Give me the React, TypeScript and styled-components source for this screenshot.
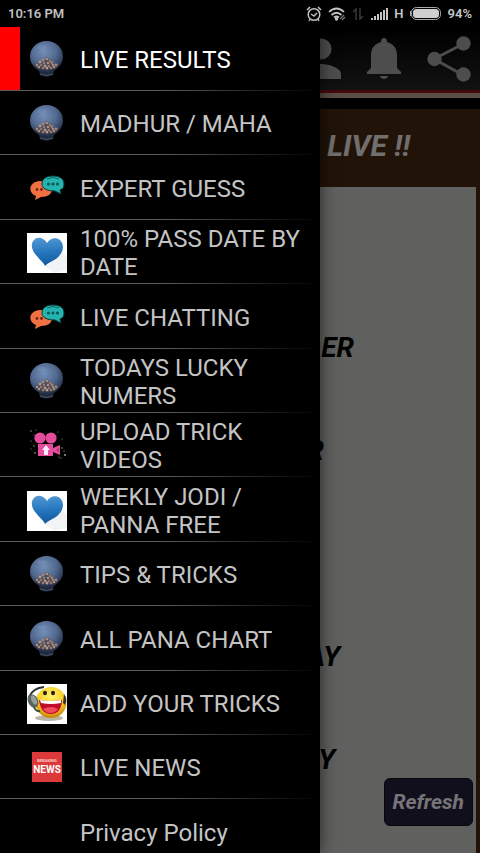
import React from "react";
import styled, { createGlobalStyle } from "styled-components";

const GlobalStyle = createGlobalStyle`
  *, *::before, *::after { box-sizing: border-box; }
  body { margin: 0; background: #000; font-family: Roboto, "Liberation Sans", sans-serif; }
`;

const Screen = styled.div`
  position: relative;
  height: 100vh;
  overflow: hidden;
  display: flex;
  flex-direction: column;
  background: #000;
`;

const StatusBar = styled.header`
  flex: none;
  height: 27px;
  padding: 0 8px;
  display: flex;
  align-items: center;
  justify-content: space-between;
  color: #c6c6c6;
  font-size: 13px;
  font-weight: 600;
  line-height: 27px;
`;

const StatusIcons = styled.div`
  display: flex;
  align-items: center;
  gap: 6px;
  svg { display: block; }
`;

const Page = styled.main`
  flex: 1;
  min-height: 0;
  display: flex;
  flex-direction: column;
`;

const Toolbar = styled.div`
  flex: none;
  height: 63px;
  padding: 0 9px;
  display: flex;
  align-items: center;
  justify-content: flex-end;
  gap: 25px;
  background: linear-gradient(#000, #242424);
`;

const IconButton = styled.button`
  padding: 0;
  border: 0;
  background: none;
  color: #9a9a9a;
  svg { display: block; }
`;

const Stripe = styled.div`
  flex: none;
  height: 8px;
  border-top: 3px solid #8c101e;
  background: #b09c88;
`;

const Board = styled.section`
  flex: 1;
  min-height: 0;
  margin-top: 11px;
  padding-right: 4px;
  display: flex;
  flex-direction: column;
  background: #422610;
`;

const Banner = styled.h1`
  flex: none;
  height: 78px;
  margin: 0;
  padding-right: 66px;
  text-align: right;
  color: #fff;
  opacity: 0.85;
  font: italic 700 30px/74px Roboto, sans-serif;
`;

const Games = styled.div`
  position: relative;
  flex: 1;
  min-height: 0;
  padding-top: 109px;
  background: #c0c0bc;
`;

const Game = styled.p<{ $end: number }>`
  height: 103px;
  margin: 0;
  padding-right: ${(p) => p.$end}px;
  text-align: right;
  color: #000;
  font: italic 700 28px/103px Roboto, sans-serif;
`;

const Refresh = styled.button`
  position: absolute;
  right: 3px;
  bottom: 27px;
  height: 48px;
  padding: 0 8px;
  border: 1px solid #100e1c;
  border-radius: 6px;
  background: #221e38;
  color: #ece8f0;
  font: italic 700 21px/28px Roboto, sans-serif;
`;

const Overlay = styled.div`
  position: absolute;
  inset: 27px 0 0;
  background: rgba(0, 0, 0, 0.5);
`;

const Drawer = styled.nav`
  width: min(320px, 85vw);
  height: 100%;
  overflow: hidden;
  background: #000;
  box-shadow: 0 0 16px rgba(0, 0, 0, 0.6);
`;

const Menu = styled.ul`
  margin: 0;
  padding: 0;
  list-style: none;
`;

const MenuItem = styled.li`
  position: relative;
  height: 64px;
  &:nth-child(5n + 3), &:nth-child(5n) { height: 65px; }
  &::after {
    content: "";
    position: absolute;
    inset: auto 0 0;
    height: 1px;
    background: linear-gradient(90deg, #5c5c5c 50%, #000);
  }
`;

const MenuLink = styled.a<{ $active: boolean }>`
  height: 100%;
  padding: 2px 8px 0 7px;
  border-left: 20px solid ${(p) => (p.$active ? "#ff0000" : "transparent")};
  display: flex;
  align-items: center;
  gap: 13px;
  color: ${(p) => (p.$active ? "#ffffff" : "#c4c4c4")};
  font-size: 24px;
  line-height: 28px;
  text-decoration: none;
`;

const IconSlot = styled.span`
  flex: none;
  width: 40px;
  height: 40px;
  svg { display: block; }
`;

function BowlIcon() {
  const pellets = [
    [16, 20], [20, 19], [23, 21], [13, 22], [17, 23], [21, 23], [25, 23],
    [10, 25], [14, 25], [18, 26], [22, 26], [26, 25], [29, 25], [12, 27], [16, 28], [20, 28], [24, 28], [27, 27],
  ];
  return (
    <svg width="40" height="40" viewBox="0 0 40 40">
      <defs>
        <radialGradient id="glass" cx=".42" cy=".34" r=".7">
          <stop offset="0" stopColor="#7390b9" />
          <stop offset=".55" stopColor="#52698f" />
          <stop offset="1" stopColor="#222e48" />
        </radialGradient>
      </defs>
      <path d="M11 27h17l-2 8q-7 3-13 0z" fill="#1f2a3d" />
      <path d="M13 34q6 3 13 0" stroke="#46536a" strokeWidth="1" fill="none" />
      <ellipse cx="19.500" cy="16.500" rx="16.500" ry="15.500" fill="url(#glass)" />
      <path d="M7 26q3 5 8 6h9q6-1 8-6l-6-3-6-4-7 4z" fill="#242c40" opacity=".5" />
      <ellipse cx="15" cy="7" rx="5" ry="2" fill="#94abc9" opacity=".2" />
      {pellets.map(([x, y], i) => (
        <g key={i}>
          <circle cx={x} cy={y} r="1.700" fill={i % 3 ? "#6d5750" : "#8d766f"} />
          <circle cx={x} cy={y} r=".9" fill={i % 2 ? "#c4ada4" : "#a88c80"} />
        </g>
      ))}
    </svg>
  );
}

function ChatIcon() {
  return (
    <svg width="40" height="40" viewBox="0 0 40 40">
      <path d="M14 12c6 0 11 3 11 8s-4 8-11 8l-6 3 1-4c-9-4-7-15 5-15z" fill="#ef7040" />
      <path d="M26 7c7 0 11 3 11 8 0 3-1 5-4 6l1 4-6-3c-9 0-13-3-13-7 0-5 4-8 11-8z" fill="#25b3ad" stroke="#063c3b" strokeWidth="1" />
      <path d="M20 10q6-3 12 0" fill="none" stroke="#126965" />
      <g fill="#075858"><circle cx="21.500" cy="15" r="1.600" /><circle cx="26" cy="15" r="1.600" /><circle cx="30.500" cy="15" r="1.600" /></g>
      <g fill="#70230e"><circle cx="10" cy="20.500" r="1.400" /><circle cx="14.500" cy="20.500" r="1.400" /></g>
    </svg>
  );
}

function HeartIcon() {
  return (
    <svg width="40" height="40" viewBox="0 0 40 40">
      <defs>
        <linearGradient id="heart" x1=".4" y1="0" x2=".5" y2="1">
          <stop stopColor="#5197d2" /><stop offset=".5" stopColor="#2777be" /><stop offset="1" stopColor="#12569d" />
        </linearGradient>
      </defs>
      <path fill="#fff" d="M0 0h40v40H0z" />
      <path d="M18 33l16-15 6 6v13l-13 3z" fill="#f1f3f5" />
      <path d="M20 10C23 5 29 4 33 7c5 5 3 12-1 16-4 5-9 5-14 10-1-3-5-6-9-11-4-4-6-11-2-15 4-4 10-2 13 3z" fill="url(#heart)" />
    </svg>
  );
}

function CameraIcon() {
  return (
    <svg width="40" height="40" viewBox="0 0 40 40">
      <g fill="#e54d9c">
        <circle cx="13" cy="12" r="5.600" /><circle cx="24" cy="12" r="5.600" />
        <path d="M11 18h15v12H11zM26 22l7-3v10l-7-3z" />
      </g>
      <path d="M19 19l4 5h-2v5h-4v-5h-2z" fill="#ffe8f7" />
      <path d="M29 24l3-2v4z" fill="#a83972" />
      <g fill="#b8aab3">
        <circle cx="4" cy="5" r=".7" /><circle cx="7" cy="9" r=".5" /><circle cx="4" cy="15" r=".6" /><circle cx="7" cy="20" r=".7" />
        <circle cx="4" cy="23" r=".5" /><circle cx="8" cy="27" r=".8" /><circle cx="32" cy="31" r=".6" /><circle cx="35" cy="22" r=".7" />
        <circle cx="38" cy="29" r=".9" /><circle cx="35" cy="13" r=".5" /><circle cx="31" cy="6" r=".5" /><circle cx="37" cy="25" r=".6" />
        <circle cx="9" cy="4" r=".5" /><circle cx="34" cy="32" r=".6" />
      </g>
    </svg>
  );
}

function SmileyIcon() {
  return (
    <svg width="40" height="40" viewBox="0 0 40 40">
      <defs>
        <radialGradient id="face" cx=".5" cy=".3" r=".68"><stop stopColor="#fff36a" /><stop offset=".65" stopColor="#f8cb23" /><stop offset="1" stopColor="#c8860f" /></radialGradient>
      </defs>
      <path fill="#fff" d="M0 0h40v40H0z" />
      <ellipse cx="22" cy="34" rx="14" ry="3" fill="#b9b6a8" />
      <ellipse cx="24" cy="18.500" rx="15.500" ry="15.500" fill="url(#face)" />
      <path d="M2 13Q6 4 17 3" fill="none" stroke="#2b3030" strokeWidth="2" />
      <path d="M37 10q4 5 1 11l-2-2z" fill="#333" />
      <ellipse cx="6" cy="17" rx="5" ry="7" transform="rotate(-25 6 17)" fill="#59615f" />
      <ellipse cx="7" cy="16" rx="2.500" ry="5" transform="rotate(-25 7 16)" fill="#969f9e" />
      <path d="M7 23q2 5 6 4" fill="none" stroke="#365036" strokeWidth="2" />
      <ellipse cx="18" cy="9" rx="2" ry="2.300" fill="#222015" /><ellipse cx="26" cy="9" rx="2" ry="2.300" fill="#222015" />
      <path d="M12 16q12 2 23 0c0 8-4 14-11 14-7 0-11-5-12-14z" fill="#c00c28" />
      <path d="M13 16q11 2 21 0v3q-10 2-20 0z" fill="#fff" />
      <path d="M16 25q8-4 15 0-3 4-7 4-5 0-8-4z" fill="#ef4b5c" />
    </svg>
  );
}

const NewsHead = styled.text`
  font: 700 4px Roboto, sans-serif;
  fill: #ffd0cb;
`;
const NewsWord = styled.text`
  font: 700 10px Roboto, sans-serif;
  fill: #fff;
`;

function NewsIcon() {
  return (
    <svg width="40" height="40" viewBox="0 0 40 40">
      <path fill="#dc393b" d="M5 4h30v30H5z" />
      <NewsHead x="20" y="14" textAnchor="middle">BREAKING</NewsHead>
      <NewsWord x="20" y="25" textAnchor="middle">NEWS</NewsWord>
    </svg>
  );
}

const items = [
  { label: "LIVE RESULTS", Icon: BowlIcon },
  { label: "MADHUR / MAHA", Icon: BowlIcon },
  { label: "EXPERT GUESS", Icon: ChatIcon },
  { label: "100% PASS DATE BY DATE", Icon: HeartIcon },
  { label: "LIVE CHATTING", Icon: ChatIcon },
  { label: "TODAYS LUCKY NUMERS", Icon: BowlIcon },
  { label: "UPLOAD TRICK VIDEOS", Icon: CameraIcon },
  { label: "WEEKLY JODI / PANNA FREE", Icon: HeartIcon },
  { label: "TIPS & TRICKS", Icon: BowlIcon },
  { label: "ALL PANA CHART", Icon: BowlIcon },
  { label: "ADD YOUR TRICKS", Icon: SmileyIcon },
  { label: "LIVE NEWS", Icon: NewsIcon },
  { label: "Privacy Policy", Icon: null },
];

const games = [
  { name: "ER", end: 122 },
  { name: "R", end: 152 },
  { name: "", end: 0 },
  { name: "AY", end: 136 },
  { name: "Y", end: 141 },
];

export default function App() {
  return (
    <Screen>
      <GlobalStyle />
      <StatusBar>
        <span>10:16 PM</span>
        <StatusIcons>
          <svg width="16" height="16" viewBox="0 0 16 16" fill="none" stroke="currentColor" strokeWidth="1.500">
            <circle cx="8" cy="8.500" r="5.800" /><path d="M1 4l3-3M15 4l-3-3M5 8l3 2 3-3M4 13l-1 2M12 13l1 2" />
          </svg>
          <svg width="18" height="14" viewBox="0 0 18 14" fill="none" stroke="currentColor" strokeWidth="1.700">
            <path d="M1 5q7.500-7 15 0M3.500 8q5-4.500 10 0M6 10.500q2.500-2 5 0" /><circle cx="8.500" cy="12" r=".8" />
            <path d="M12 12l4-4M14 13l3-3" stroke="#777" strokeWidth="1.300" />
          </svg>
          <svg width="12" height="12" viewBox="0 0 12 12" fill="none" stroke="#383838" strokeWidth="1.500">
            <path d="M4 12V1L1 4M8 0v11l3-3" />
          </svg>
          <svg width="18" height="12" viewBox="0 0 18 12" fill="currentColor">
            <path d="M1 10h2v2H1zM4 8h2v4H4zM7 6h2v6H7zM10 4h2v8h-2zM13 2h2v10h-2zM16 0h2v12h-2z" />
          </svg>
          <span>H</span>
          <svg width="32" height="13" viewBox="0 0 32 13">
            <rect x="1.500" y=".5" width="29" height="12" rx="5" fill="none" stroke="#aaa" />
            <rect x="3" y="2" width="26" height="9" rx="3.500" fill="#d0d0d0" /><path d="M0 4h1v5H0z" fill="#aaa" />
          </svg>
          <span>94%</span>
        </StatusIcons>
      </StatusBar>
      <Page>
        <Toolbar>
          <IconButton aria-label="Profile">
            <svg width="40" height="42" viewBox="0 0 40 42" fill="currentColor">
              <circle cx="20" cy="11" r="10.500" /><path d="M0 41v-5c0-6 12-10 20-10s20 4 20 10v5z" />
            </svg>
          </IconButton>
          <IconButton aria-label="Notifications">
            <svg width="36" height="42" viewBox="0 0 36 42" fill="currentColor">
              <path d="M18 0c2 0 3 1 3 4 7 2 10 7 10 13v13l4 4v2H1v-2l4-4V17C5 11 8 6 15 4c0-3 1-4 3-4zM14 38h8c0 4-8 4-8 0z" />
            </svg>
          </IconButton>
          <IconButton aria-label="Share">
            <svg width="44" height="46" viewBox="0 0 44 46" fill="currentColor">
              <path d="M7 23L36 8M7 23l29 16" stroke="currentColor" strokeWidth="3" />
              <circle cx="7.500" cy="23" r="7.200" /><circle cx="36.500" cy="7.500" r="7.200" /><circle cx="36.500" cy="38.500" r="7.200" />
            </svg>
          </IconButton>
        </Toolbar>
        <Stripe />
        <Board>
          <Banner>LIVE !!</Banner>
          <Games>
            {games.map((g, i) => <Game key={i} $end={g.end}>{g.name}</Game>)}
            <Refresh>Refresh</Refresh>
          </Games>
        </Board>
      </Page>
      <Overlay>
        <Drawer aria-label="Main menu">
          <Menu>
            {items.map(({ label, Icon }, i) => (
              <MenuItem key={label}>
                <MenuLink href="#" $active={i === 0} aria-current={i === 0 ? "page" : undefined}>
                  <IconSlot>{Icon && <Icon />}</IconSlot>
                  <span>{label}</span>
                </MenuLink>
              </MenuItem>
            ))}
          </Menu>
        </Drawer>
      </Overlay>
    </Screen>
  );
}
